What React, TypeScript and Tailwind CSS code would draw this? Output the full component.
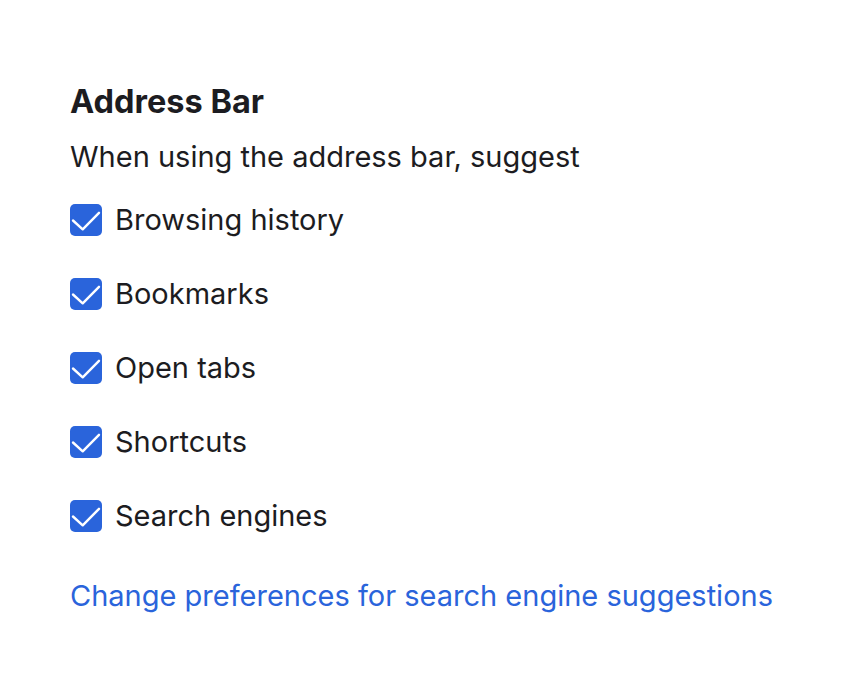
const items = [
  "Browsing history",
  "Bookmarks",
  "Open tabs",
  "Shortcuts",
  "Search engines",
];

function CheckBox() {
  return (
    <span className="flex h-8 w-8 shrink-0 items-center justify-center rounded-[5px] bg-[#2a64db]">
      <svg viewBox="0 0 32 32" className="h-8 w-8" fill="none">
        <path
          d="M3 16.5 L12.7 25.3 L29 8.8"
          stroke="white"
          strokeWidth="2.4"
          strokeLinecap="round"
          strokeLinejoin="round"
        />
      </svg>
    </span>
  );
}

export default function App() {
  return (
    <div className="min-h-[684px] bg-white px-[70px] pt-[84px] font-['Inter',sans-serif] text-[#1c1c21]">
      <h1 className="text-[32.5px] font-bold leading-9">Address Bar</h1>
      <p className="mt-[19px] text-[29px] leading-9">
        When using the address bar, suggest
      </p>
      <div className="mt-[29px] flex flex-col gap-[42px]">
        {items.map((label) => (
          <label key={label} className="flex items-center gap-[13px]">
            <CheckBox />
            <span className="text-[29px] leading-8">{label}</span>
          </label>
        ))}
      </div>
      <a className="mt-[46px] block text-[29px] leading-9 text-[#2a64db]">
        Change preferences for search engine suggestions
      </a>
    </div>
  );
}
